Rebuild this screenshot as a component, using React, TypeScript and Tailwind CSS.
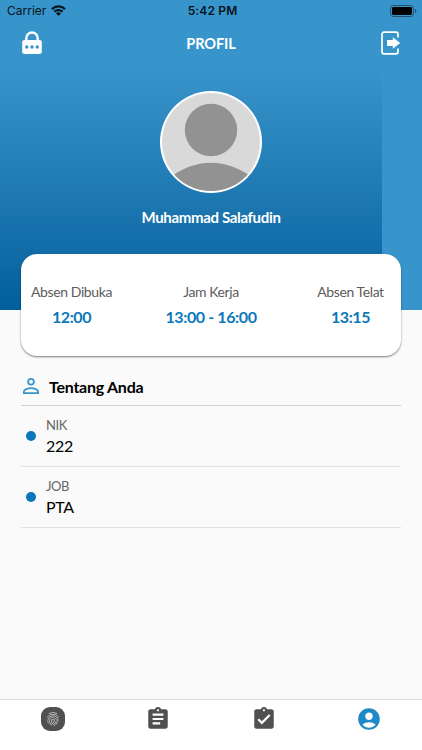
import React from 'react';
import {
  MdAccountCircle,
  MdAssignment,
  MdAssignmentTurnedIn,
  MdFingerprint,
} from 'react-icons/md';

const SCHEDULE = [
  { label: 'Absen Dibuka', value: '12:00' },
  { label: 'Jam Kerja', value: '13:00 - 16:00' },
  { label: 'Absen Telat', value: '13:15' },
];

const DETAILS = [
  { label: 'NIK', value: '222' },
  { label: 'JOB', value: 'PTA' },
];

const StatusBar: React.FC = () => (
  <div className="grid h-[22px] grid-cols-3 items-center pl-[7px] pr-[5px] font-['Inter',sans-serif] text-[12px] text-[#06141c]">
    <div className="flex items-center gap-[5px]">
      <span>Carrier</span>
      <svg className="-mt-px" width="15" height="11" viewBox="0 0 15 11" fill="none" stroke="currentColor" strokeWidth="2.2">
        <path d="M1 4.1a9.3 9.3 0 0 1 13 0" />
        <path d="M3.4 6.8a5.9 5.9 0 0 1 8.2 0" />
        <path d="M7.5 10.8 5 8.5a3.6 3.6 0 0 1 5 0z" fill="currentColor" stroke="none" />
      </svg>
    </div>
    <span className="pl-px text-center font-semibold tracking-[0.15px]">5:42 PM</span>
    <svg className="-mt-px justify-self-end" width="27" height="12" viewBox="0 0 27 12">
      <rect x="0.5" y="0.5" width="23" height="11" rx="2.8" fill="none" stroke="#1f5371" />
      <rect x="2" y="2" width="20" height="8" rx="1.4" fill="#000" />
      <path d="M25 4v4c.9-.3 1.4-1.1 1.4-2S25.9 4.3 25 4z" fill="#1f5371" />
    </svg>
  </div>
);

const LockIcon: React.FC = () => (
  <svg width="22" height="24" viewBox="0 0 22 24">
    <path d="M5.3 10V7.2a5.7 5.7 0 0 1 11.4 0V10" fill="none" stroke="#fff" strokeWidth="2.4" />
    <rect x="1.2" y="9" width="19.6" height="14" rx="2.2" fill="#fff" />
    <circle cx="5.8" cy="16" r="1.7" fill="#3895cb" />
    <circle cx="11" cy="16" r="1.7" fill="#3895cb" />
    <circle cx="16.2" cy="16" r="1.7" fill="#3895cb" />
  </svg>
);

const ExitIcon: React.FC = () => (
  <svg width="20" height="24" viewBox="0 0 20 24">
    <path d="M17 6.5V3.2a2 2 0 0 0-2-2H3a2 2 0 0 0-2 2v17.6a2 2 0 0 0 2 2h12a2 2 0 0 0 2-2v-3.3" fill="none" stroke="#fff" strokeWidth="1.7" />
    <path d="M6 9h5.8V6.2l7.4 5.8-7.4 5.8V15H6z" fill="#fff" />
  </svg>
);

const PersonIcon: React.FC = () => (
  <svg className="mt-[3px] ml-[2px]" width="16" height="18" viewBox="0 0 16 18" fill="none" stroke="#3895cb" strokeWidth="1.8">
    <circle cx="8" cy="4.7" r="2.9" />
    <path d="M.9 16.1v-1.5c0-2.2 4-3.4 7.1-3.4s7.1 1.2 7.1 3.400v1.500z" />
  </svg>
);

const Avatar: React.FC = () => (
  <svg width="102" height="102" viewBox="0 0 102 102">
    <defs>
      <clipPath id="avatar">
        <circle cx="51" cy="51" r="49" />
      </clipPath>
    </defs>
    <circle cx="51" cy="51" r="51" fill="#fff" />
    <g clipPath="url(#avatar)">
      <rect width="102" height="102" fill="#d9d9d9" />
      <circle cx="51" cy="39" r="26.2" fill="#929292" />
      <path d="M6 89C36 66 66 66 96 89v13H6z" fill="#929292" />
    </g>
  </svg>
);

const TabBar: React.FC = () => (
  <nav className="grid h-[51px] grid-cols-4 justify-items-center border-t border-[#dedede] bg-white pt-[6px] text-[#505050]">
    <span className="flex h-[24px] w-[24px] translate-y-px items-center justify-center rounded-[9px] bg-[#505050] text-[#d0d0d0]">
      <MdFingerprint size={16} />
    </span>
    <MdAssignment size={26} />
    <MdAssignmentTurnedIn size={26} />
    <MdAccountCircle size={26} className="text-[#1f89c7]" />
  </nav>
);

export default function App() {
  return (
    <div className="flex h-[750px] w-[422px] flex-col overflow-hidden bg-[#fafafa] font-['Lato',sans-serif]">
      <header className="h-[310px] shrink-0 bg-[#3895cb]">
        <StatusBar />
        <div className="flex h-[44px] items-center justify-between px-[21px] pb-[2px]">
          <LockIcon />
          <h1 className="pt-[2px] pr-[2px] text-[14.5px] font-bold tracking-[-0.1px] text-white">PROFIL</h1>
          <ExitIcon />
        </div>
        <div className="h-[244px] w-[382px] bg-linear-to-b from-[#3895cb] to-[#005f9c]">
          <div className="flex w-[422px] flex-col items-center pt-[25px]">
            <Avatar />
            <p className="mt-[13px] text-[15px] leading-[22px] font-bold tracking-[-0.33px] text-white">Muhammad Salafudin</p>
          </div>
        </div>
      </header>

      <main className="flex-1 px-[21px]">
        <section className="relative -mt-[56px] grid h-[102px] grid-cols-[81px_1fr_81px] items-center rounded-[16px] bg-white px-[10px] shadow-[0_1px_2px_rgba(0,0,0,0.5)]">
          {SCHEDULE.map((item) => (
            <div key={item.label} className="flex flex-col items-center whitespace-nowrap">
              <span className="text-[14px] leading-[20px] tracking-[-0.4px] text-[#5c5c5c]">{item.label}</span>
              <span className="mt-[4px] text-[16px] leading-[22px] font-bold tracking-[-0.4px] text-[#0a78b9]">{item.value}</span>
            </div>
          ))}
        </section>

        <section className="mt-[18px]">
          <div className="flex h-[32px] items-start border-b border-[#cfcfcf]">
            <PersonIcon />
            <h2 className="ml-[10px] text-[16px] leading-[26px] font-bold tracking-[-0.25px] text-black">Tentang Anda</h2>
          </div>
          {DETAILS.map((item) => (
            <div key={item.label} className="flex h-[61px] items-center border-b border-[#e2e2e2] pl-[5px]">
              <span className="h-[10px] w-[10px] rounded-full bg-[#0a78b9]" />
              <div className="ml-[10px] flex flex-col">
                <span className="text-[13px] leading-[18px] tracking-[-0.4px] text-[#666]">{item.label}</span>
                <span className="mt-px text-[16px] leading-[22px] tracking-[-0.3px] text-black">{item.value}</span>
              </div>
            </div>
          ))}
        </section>
      </main>

      <TabBar />
    </div>
  );
}
